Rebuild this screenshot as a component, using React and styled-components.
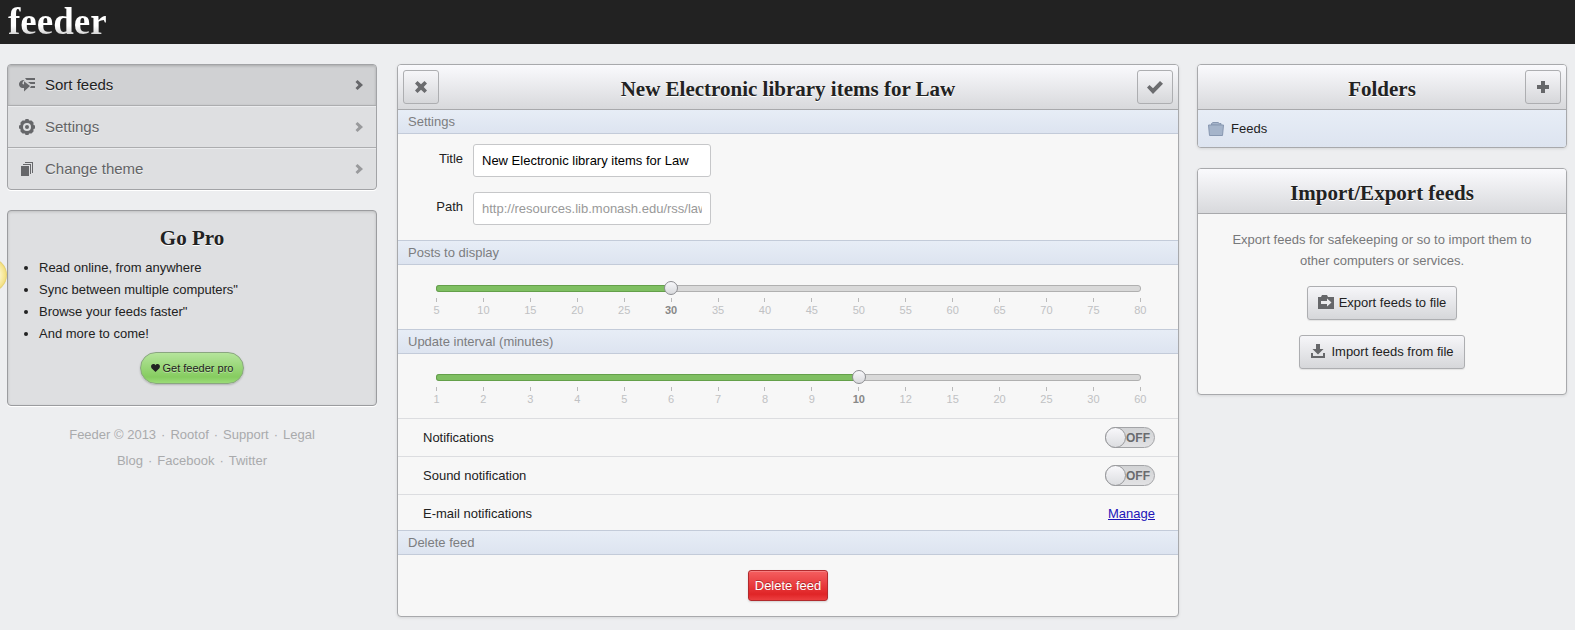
import React, { useState } from "react";
import styled, { createGlobalStyle, css } from "styled-components";

const GlobalStyle = createGlobalStyle`
  *, *::before, *::after { box-sizing: border-box; }
  body {
    margin: 0;
    background: #edeef0;
    color: #222;
    font: 13px/22px "Liberation Sans", Arial, sans-serif;
    overflow-x: hidden;
  }
  h1, h2, p, ul { margin: 0; padding: 0; }
  button, input { font-family: inherit; margin: 0; }
  svg { display: block; flex: none; }
`;

const serif = css`font-family: "Liberation Serif", "Times New Roman", serif;`;

const TopBar = styled.header`
  height: 44px;
  padding: 0 8px;
  background: #222;
`;

const Logo = styled.a`
  ${serif}
  display: inline-block;
  font-size: 37px;
  line-height: 43px;
  font-weight: bold;
  text-decoration: none;
  color: transparent;
  background: linear-gradient(#fff 60%, #d4d4d4 80%);
  background-clip: text;
`;

const Page = styled.div`
  display: flex;
  align-items: flex-start;
  padding: 20px 8px 13px 7px;
`;

const Sidebar = styled.aside`
  flex: 370 1 0;
  min-width: 0;
  display: flex;
  flex-direction: column;
  gap: 20px;
`;

const Main = styled.main`
  flex: 782 1 0;
  min-width: 0;
  margin: 0 18px 0 20px;
`;

const Menu = styled.nav`
  border: 1px solid #a2a3a6;
  border-radius: 4px;
  background: #dedfe1;
  box-shadow: 0 1px 0 #fff;
  overflow: hidden;
`;

const MenuItem = styled.a`
  display: flex;
  align-items: center;
  height: 42px;
  padding: 0 13px 0 11px;
  gap: 10px;
  font-size: 15px;
  text-decoration: none;
  text-shadow: 0 1px 0 rgba(255, 255, 255, 0.5);
  color: ${(p) => (p.$active ? "#222" : "#636466")};
  background: ${(p) => (p.$active ? "#d0d1d3" : "transparent")};
  box-shadow: ${(p) => (p.$active ? "inset 0 1px 3px rgba(0,0,0,.2)" : "inset 0 1px 0 #ebecee")};
  & + & { border-top: 1px solid #acadaf; }
  &:first-child { height: 40px; }
  span { flex: 1; }
`;

const ProBox = styled.section`
  border: 1px solid #9b9c9f;
  border-radius: 4px;
  background: #dedfe1;
  box-shadow: inset 0 1px 3px rgba(0, 0, 0, 0.15), 0 1px 0 #fff;
  padding: 15px 16px 21px;
  text-align: center;
  ul { padding-left: 15px; margin: 7px 0; text-align: left; }
`;

const Title = styled.h2`
  ${serif}
  font-size: 21px;
  line-height: 24px;
  font-weight: bold;
  text-align: center;
  text-shadow: 0 1px 0 #fff;
`;

const ProButton = styled.button`
  display: inline-flex;
  align-items: center;
  gap: 3px;
  height: 32px;
  padding: 0 10px;
  border: 1px solid #8aa680;
  border-radius: 16px;
  background: linear-gradient(#b5e59c, #86cc60 80%, #9bdc77);
  box-shadow: 0 1px 2px rgba(0, 0, 0, 0.2);
  font-size: 11px;
  color: #222;
  text-shadow: 0 1px 0 rgba(255, 255, 255, 0.4);
`;

const Footer = styled.footer`
  text-align: center;
  line-height: 26px;
  color: #a9aaac;
  margin-top: -4px;
  a { color: inherit; text-decoration: none; }
  a + a::before { content: "·"; margin: 0 5px; }
`;

const Beacon = styled.div`
  position: absolute;
  left: -27px;
  top: 258px;
  width: 34px;
  height: 34px;
  border-radius: 50%;
  background: radial-gradient(#fffbe0 30%, #f4e287 64%, #e2cd6c 70%);
`;

const Panel = styled.section`
  border: 1px solid #a8a9ac;
  border-radius: 4px;
  background: #f7f7f7;
  box-shadow: 0 1px 3px rgba(0, 0, 0, 0.1);
  overflow: hidden;
`;

const PanelHead = styled.div`
  display: grid;
  grid-template-columns: 36px 1fr 36px;
  align-items: center;
  height: 45px;
  padding: 0 5px;
  border-bottom: 1px solid #a8a9ac;
  background: linear-gradient(#fafafd, #d8d9dc);
  ${Title} { grid-column: 2; padding-top: 4px; }
`;

const buttonFace = css`
  border: 1px solid #adaeb1;
  border-radius: 3px;
  background: linear-gradient(#f6f6f9, #d6d7da);
  color: #222;
`;

const IconButton = styled.button`
  ${buttonFace}
  display: flex;
  align-items: center;
  justify-content: center;
  height: 34px;
  padding: 0;
`;

const SectionBar = styled.h2`
  height: 25px;
  padding: 0 10px;
  border: solid #c3cbd9;
  border-width: 1px 0;
  background: linear-gradient(#e7edf6, #dde4f0);
  font-size: 13px;
  line-height: 24px;
  font-weight: normal;
  color: #7c7d80;
  ${PanelHead} + & { height: 24px; border-top: 0; }
`;

const Form = styled.form`
  display: grid;
  grid-template-columns: 55px minmax(0, 238px);
  gap: 15px 10px;
  padding: 10px 10px 15px;
  label { text-align: right; line-height: 30px; }
`;

const TextInput = styled.input`
  width: 100%;
  height: 33px;
  padding: 0 8px;
  border: 1px solid #c6c7c9;
  border-radius: 3px;
  background: #fff;
  font-size: 13px;
  color: ${(p) => (p.readOnly ? "#999" : "#000")};
`;

const SliderArea = styled.div`
  height: 64px;
  padding: 16px 37px 0 38px;
`;

const SliderStack = styled.div`
  display: grid;
  align-items: center;
  > * { grid-area: 1 / 1; }
`;

const Track = styled.div`
  height: 7px;
  border: 1px solid #b0b0b0;
  border-radius: 3px;
  background: #d9d9d9;
`;

const Fill = styled.div`
  height: 100%;
  border-radius: 2px;
  background: #7fbf62;
  box-shadow: 0 0 0 1px #64a04a;
`;

const Range = styled.input`
  appearance: none;
  height: 14px;
  margin: 0 -7px;
  background: transparent;
  z-index: 1;
  &::-webkit-slider-thumb {
    appearance: none;
    box-sizing: border-box;
    width: 14px;
    height: 14px;
    border: 1px solid #8d8e92;
    border-radius: 50%;
    background: linear-gradient(#f7f7fa, #d9dadd);
  }
`;

const Ticks = styled.div`
  display: flex;
  justify-content: space-between;
  padding-top: 3px;
`;

const Tick = styled.span`
  display: flex;
  flex-direction: column;
  align-items: center;
  width: 1px;
  font-size: 11px;
  line-height: 16px;
  font-weight: ${(p) => (p.$active ? "bold" : "normal")};
  color: ${(p) => (p.$active ? "#888" : "#c0c1c3")};
  &::before { content: ""; width: 1px; height: 4px; background: #bbb; }
`;

const OptionRow = styled.div`
  display: flex;
  align-items: center;
  justify-content: space-between;
  height: 38px;
  padding: 0 23px 0 25px;
  border-top: 1px solid #dcdde0;
  a { color: #1d14b8; }
  & + ${SectionBar} { margin-top: -2px; }
`;

const Switch = styled.input`
  appearance: none;
  display: flex;
  align-items: center;
  width: 50px;
  height: 21px;
  border: 1px solid #a3a4a7;
  border-radius: 11px;
  background: linear-gradient(#d2d3d5, #e2e2e4);
  font-size: 12px;
  font-weight: bold;
  color: #6a6b6e;
  &::before {
    content: "";
    flex: none;
    width: 21px;
    height: 21px;
    margin: 0 -1px;
    border: 1px solid #98999c;
    border-radius: 50%;
    background: linear-gradient(#f8f8fb, #dcdde0);
  }
  &::after { content: "OFF"; flex: 1; padding-right: 3px; line-height: 18px; text-align: center; }
  &:checked { flex-direction: row-reverse; }
  &:checked::after { content: "ON"; }
`;

const Actions = styled.div`
  display: flex;
  justify-content: center;
  padding: 15px;
`;

const DeleteButton = styled.button`
  height: 31px;
  padding: 0 6px;
  border: 1px solid #b22a2d;
  border-radius: 3px;
  background: linear-gradient(#f55f60, #e02527 80%, #ec3f40);
  box-shadow: inset 0 1px 0 rgba(255, 255, 255, 0.2), 0 1px 2px rgba(0, 0, 0, 0.15);
  color: #fff;
  font-size: 13px;
  text-shadow: 0 -1px 0 rgba(0, 0, 0, 0.3);
`;

const FolderLink = styled.a`
  display: flex;
  align-items: center;
  gap: 7px;
  height: 37px;
  padding: 0 10px;
  background: linear-gradient(#e7edf6, #dde4f0);
  color: #222;
  text-decoration: none;
`;

const Transfer = styled.div`
  display: flex;
  flex-direction: column;
  align-items: center;
  gap: 15px;
  padding: 15px 24px 25px;
  p { line-height: 21px; text-align: center; color: #77787a; }
`;

const FileButton = styled.button`
  ${buttonFace}
  display: flex;
  align-items: center;
  gap: 5px;
  height: 34px;
  padding: 0 10px 2px;
  font-size: 13px;
  box-shadow: 0 1px 1px rgba(0, 0, 0, 0.08);
`;

const SortIcon = () => (
  <svg width="16" height="16" viewBox="0 0 16 16" fill="#66676a">
    <path d="M6 1h10v2H7.500zM9 5h7v2h-4.500zM12 9h4v2h-5z" />
    <path d="M5.500 3C2 3 0 5 0 7.400 0 9.800 2 11 5 11v3.500L11 9 5 4.200V7.500L3.500 7C3.200 5.200 4.200 4 5.500 3z" />
  </svg>
);
const GearIcon = () => (
  <svg width="16" height="16" viewBox="0 0 16 16" fill="#66676a">
    <path
      fillRule="evenodd"
      d="M6.500 0h3l.5 1.500L12.500 1.500 14.500 3.500V6l1.500.5v3l-1.500.5v2.500l-2 2H10L9.500 16h-3L6 14.500H3.500l-2-2V10L0 9.500v-3L1.500 6V3.500l2-2H6zM8 4a4 4 0 1 0 0 8 4 4 0 0 0 0-8z"
    />
    <circle cx="8" cy="8" r="2" />
  </svg>
);
const ThemeIcon = () => (
  <svg width="16" height="16" viewBox="0 0 16 16" fill="#66676a">
    <rect x="2" y="5" width="8" height="10" />
    <path d="M4 3h8v10h-1V4H4zM6 1h8v11h-1V2H6z" />
  </svg>
);
const Chevron = ({ color }) => (
  <svg width="8" height="10" viewBox="0 0 8 10" fill={color}>
    <path d="M.5 2L2.500 0l5.500 5-5.500 5L.5 8l3-3z" />
  </svg>
);
const CrossIcon = () => (
  <svg width="12" height="12" viewBox="0 0 12 12" fill="#6b6c6f">
    <path d="M2.500 0L6 3.300 9.500 0 12 2.500 8.700 6 12 9.500 9.500 12 6 8.700 2.500 12 0 9.500 3.300 6 0 2.500z" />
  </svg>
);
const CheckIcon = () => (
  <svg width="16" height="13" viewBox="0 0 16 13" fill="#6b6c6f">
    <path d="M0 6.500L2.500 4 6 7.200 13 0l3 2.800L6 13z" />
  </svg>
);
const PlusIcon = () => (
  <svg width="12" height="12" viewBox="0 0 12 12" fill="#66676a">
    <path d="M4 0h4v4h4v4H8v4H4V8H0V4h4z" />
  </svg>
);
const HeartIcon = () => (
  <svg width="9" height="8" viewBox="0 0 9 8" fill="#222">
    <path d="M4.500 8L.6 4.200C-.6 2.500.3 0 2.400 0c1 0 1.700.5 2.100 1.200C4.900.5 5.600 0 6.600 0c2.100 0 3 2.500 1.800 4.200z" />
  </svg>
);
const FolderIcon = () => (
  <svg width="16" height="14" viewBox="0 0 16 14">
    <path d="M3.500 3V1.500L5 .5h5l1.500 1h1.500V3.500z" fill="#a5b4ca" stroke="#8797b0" />
    <path d="M.5 3h15l-1 10.500h-13z" fill="#a5b4ca" stroke="#8797b0" />
  </svg>
);
const ExportIcon = () => (
  <svg width="16" height="14" viewBox="0 0 16 14">
    <path d="M0 2h3l1-2h5l1 2h6v12H0z" fill="#66676a" />
    <path d="M3 6h6V3.500L13.500 7.500 9 11.500V9H3z" fill="#ececee" />
  </svg>
);
const ImportIcon = () => (
  <svg width="16" height="14" viewBox="0 0 16 14" fill="#66676a">
    <path d="M6 0h4v5h3.500L8 10.500 2.500 5H6zM1 9h2v3h10V9h2v5H1z" />
  </svg>
);

function Slider({ label, values, initial }) {
  const [index, setIndex] = useState(initial);
  return (
    <SliderArea>
      <SliderStack>
        <Track>
          <Fill style={{ width: `${(index / (values.length - 1)) * 100}%` }} />
        </Track>
        <Range
          type="range"
          aria-label={label}
          min="0"
          max={values.length - 1}
          value={index}
          onChange={(e) => setIndex(Number(e.target.value))}
        />
      </SliderStack>
      <Ticks>
        {values.map((v, i) => (
          <Tick key={v} $active={i === index}>{v}</Tick>
        ))}
      </Ticks>
    </SliderArea>
  );
}

const POSTS = [5, 10, 15, 20, 25, 30, 35, 40, 45, 50, 55, 60, 65, 70, 75, 80];
const MINUTES = [1, 2, 3, 4, 5, 6, 7, 8, 9, 10, 12, 15, 20, 25, 30, 60];

export default function App() {
  return (
    <>
      <GlobalStyle />
      <TopBar>
        <Logo href="#">feeder</Logo>
      </TopBar>
      <Beacon />
      <Page>
        <Sidebar>
          <Menu>
            <MenuItem href="#" $active><SortIcon /><span>Sort feeds</span><Chevron color="#66676a" /></MenuItem>
            <MenuItem href="#"><GearIcon /><span>Settings</span><Chevron color="#999a9c" /></MenuItem>
            <MenuItem href="#"><ThemeIcon /><span>Change theme</span><Chevron color="#999a9c" /></MenuItem>
          </Menu>
          <ProBox>
            <Title>Go Pro</Title>
            <ul>
              <li>Read online, from anywhere</li>
              <li>Sync between multiple computers"</li>
              <li>Browse your feeds faster"</li>
              <li>And more to come!</li>
            </ul>
            <ProButton type="button"><HeartIcon />Get feeder pro</ProButton>
          </ProBox>
          <Footer>
            <div>
              <a href="#">Feeder © 2013</a><a href="#">Rootof</a><a href="#">Support</a><a href="#">Legal</a>
            </div>
            <div>
              <a href="#">Blog</a><a href="#">Facebook</a><a href="#">Twitter</a>
            </div>
          </Footer>
        </Sidebar>

        <Main>
          <Panel>
            <PanelHead>
              <IconButton type="button" aria-label="Close"><CrossIcon /></IconButton>
              <Title as="h1">New Electronic library items for Law</Title>
              <IconButton type="button" aria-label="Save"><CheckIcon /></IconButton>
            </PanelHead>
            <SectionBar>Settings</SectionBar>
            <Form>
              <label htmlFor="title">Title</label>
              <TextInput id="title" type="text" defaultValue="New Electronic library items for Law" />
              <label htmlFor="path">Path</label>
              <TextInput id="path" type="text" readOnly value="http://resources.lib.monash.edu/rss/law.xml" />
            </Form>
            <SectionBar>Posts to display</SectionBar>
            <Slider label="Posts to display" values={POSTS} initial={5} />
            <SectionBar>Update interval (minutes)</SectionBar>
            <Slider label="Update interval (minutes)" values={MINUTES} initial={9} />
            <OptionRow>
              <label htmlFor="notifications">Notifications</label>
              <Switch id="notifications" type="checkbox" role="switch" />
            </OptionRow>
            <OptionRow>
              <label htmlFor="sound">Sound notification</label>
              <Switch id="sound" type="checkbox" role="switch" />
            </OptionRow>
            <OptionRow>
              <span>E-mail notifications</span>
              <a href="#">Manage</a>
            </OptionRow>
            <SectionBar>Delete feed</SectionBar>
            <Actions>
              <DeleteButton type="button">Delete feed</DeleteButton>
            </Actions>
          </Panel>
        </Main>

        <Sidebar>
          <Panel>
            <PanelHead>
              <Title>Folders</Title>
              <IconButton type="button" aria-label="Add folder"><PlusIcon /></IconButton>
            </PanelHead>
            <FolderLink href="#"><FolderIcon />Feeds</FolderLink>
          </Panel>
          <Panel>
            <PanelHead>
              <Title>Import/Export feeds</Title>
            </PanelHead>
            <Transfer>
              <p>Export feeds for safekeeping or so to import them to other computers or services.</p>
              <FileButton type="button"><ExportIcon />Export feeds to file</FileButton>
              <FileButton type="button"><ImportIcon />Import feeds from file</FileButton>
            </Transfer>
          </Panel>
        </Sidebar>
      </Page>
    </>
  );
}
